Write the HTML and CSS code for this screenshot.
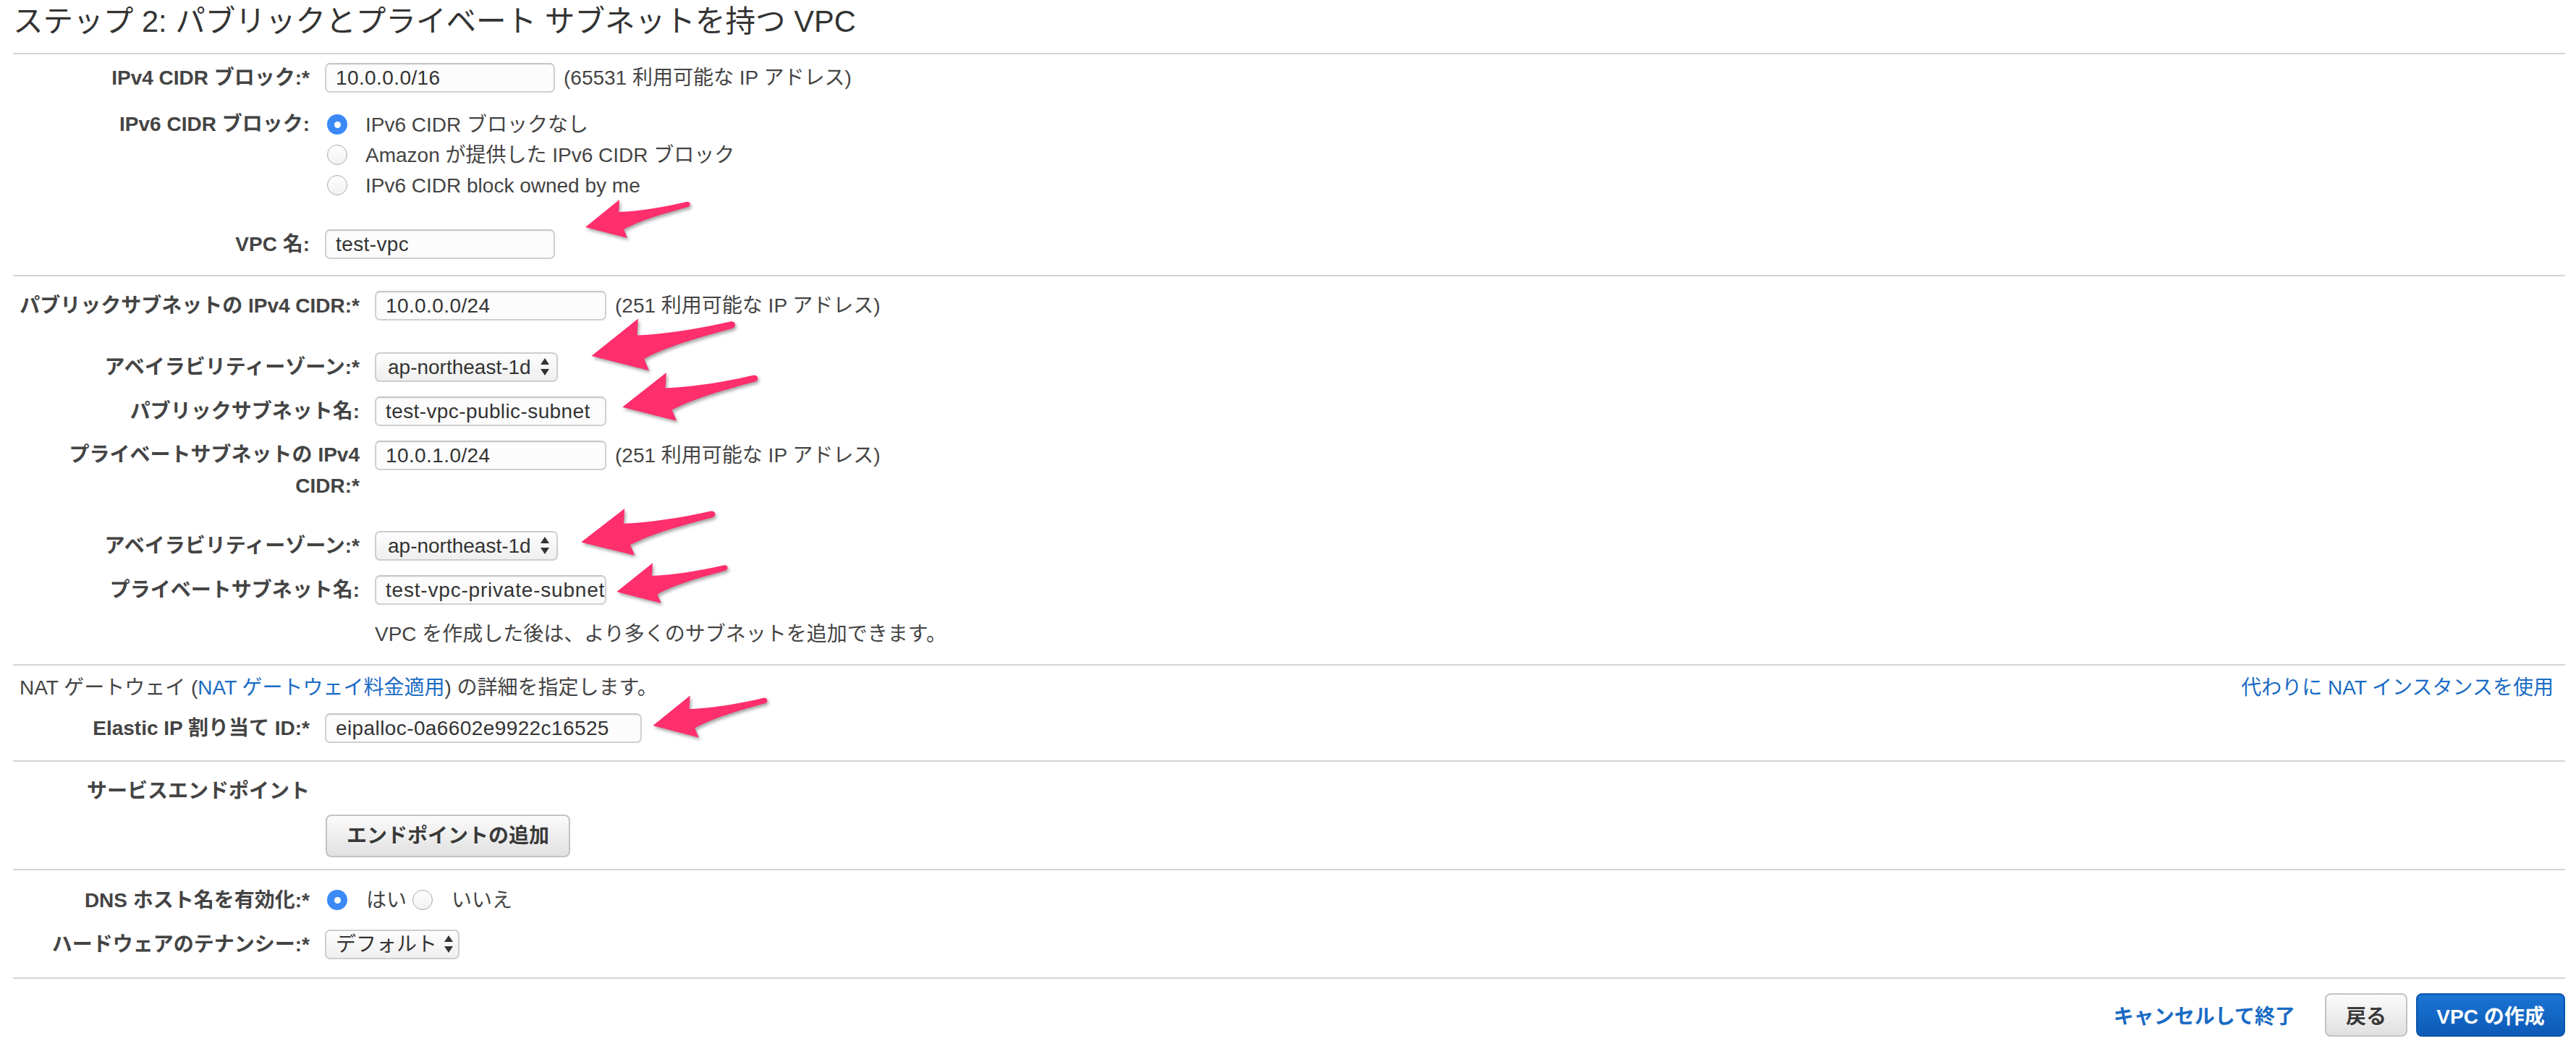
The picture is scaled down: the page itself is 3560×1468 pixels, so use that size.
FILE: index.html
```html
<!DOCTYPE html>
<html lang="ja">
<head>
<meta charset="utf-8">
<title>ステップ 2: パブリックとプライベート サブネットを持つ VPC</title>
<link rel="stylesheet" href="styles.css">
</head>
<body>
<div class="page">
  <h1 class="title">ステップ 2: パブリックとプライベート サブネットを持つ VPC</h1>

  <section class="sec sec-vpc">
    <div class="row">
      <label class="lbl">IPv4 CIDR ブロック:*</label>
      <div class="val"><input class="txt w-318" type="text" value="10.0.0.0/16"><span class="hint">(65531 利用可能な IP アドレス)</span></div>
    </div>
    <div class="row row-top row-ipv6">
      <label class="lbl lbl-radio">IPv6 CIDR ブロック:</label>
      <div class="val radios">
        <div class="opt"><span class="radio on"></span><span>IPv6 CIDR ブロックなし</span></div>
        <div class="opt"><span class="radio"></span><span>Amazon が提供した IPv6 CIDR ブロック</span></div>
        <div class="opt"><span class="radio"></span><span>IPv6 CIDR block owned by me</span></div>
      </div>
    </div>
    <div class="row row-vpcname">
      <label class="lbl">VPC 名:</label>
      <div class="val"><input class="txt w-318" type="text" value="test-vpc"></div>
    </div>
  </section>

  <section class="sec sec-subnet">
    <div class="row">
      <label class="lbl">パブリックサブネットの IPv4 CIDR:*</label>
      <div class="val"><input class="txt w-320" type="text" value="10.0.0.0/24"><span class="hint">(251 利用可能な IP アドレス)</span></div>
    </div>
    <div class="row row-az">
      <label class="lbl">アベイラビリティーゾーン:*</label>
      <div class="val"><div class="select w-253"><span>ap-northeast-1d</span><svg class="updown" viewBox="0 0 14 24" width="14" height="24"><path d="M7 0 L13 9 L1 9 Z M1 15 L13 15 L7 24 Z" fill="#333"/></svg></div></div>
    </div>
    <div class="row row-next">
      <label class="lbl">パブリックサブネット名:</label>
      <div class="val"><input class="txt w-320" type="text" value="test-vpc-public-subnet"></div>
    </div>
    <div class="row row-top row-next">
      <label class="lbl lbl-wrap">プライベートサブネットの IPv4 CIDR:*</label>
      <div class="val val-top"><input class="txt w-320" type="text" value="10.0.1.0/24"><span class="hint">(251 利用可能な IP アドレス)</span></div>
    </div>
    <div class="row row-az2">
      <label class="lbl">アベイラビリティーゾーン:*</label>
      <div class="val"><div class="select w-253"><span>ap-northeast-1d</span><svg class="updown" viewBox="0 0 14 24" width="14" height="24"><path d="M7 0 L13 9 L1 9 Z M1 15 L13 15 L7 24 Z" fill="#333"/></svg></div></div>
    </div>
    <div class="row row-next">
      <label class="lbl">プライベートサブネット名:</label>
      <div class="val"><input class="txt w-320 tight" type="text" value="test-vpc-private-subnet"></div>
    </div>
    <div class="row row-next">
      <span class="lbl"></span>
      <div class="val note">VPC を作成した後は、より多くのサブネットを追加できます。</div>
    </div>
  </section>

  <section class="sec sec-nat">
    <div class="nat-line">
      <span class="nat-text">NAT ゲートウェイ (<a class="link" href="#">NAT ゲートウェイ料金適用</a>) の詳細を指定します。</span>
      <a class="link nat-alt" href="#">代わりに NAT インスタンスを使用</a>
    </div>
    <div class="row row-eip">
      <label class="lbl">Elastic IP 割り当て ID:*</label>
      <div class="val"><input class="txt w-438" type="text" value="eipalloc-0a6602e9922c16525"></div>
    </div>
  </section>

  <section class="sec sec-endpoint">
    <div class="row">
      <label class="lbl">サービスエンドポイント</label>
      <div class="val"></div>
    </div>
    <div class="row row-btn">
      <span class="lbl"></span>
      <div class="val"><button class="btn btn-add" type="button">エンドポイントの追加</button></div>
    </div>
  </section>

  <section class="sec sec-dns">
    <div class="row">
      <label class="lbl">DNS ホスト名を有効化:*</label>
      <div class="val yesno">
        <span class="radio on"></span><span class="yes">はい</span><span class="radio"></span><span class="no">いいえ</span>
      </div>
    </div>
    <div class="row row-next">
      <label class="lbl">ハードウェアのテナンシー:*</label>
      <div class="val"><div class="select w-186 sel-hw"><span>デフォルト</span><svg class="updown" viewBox="0 0 14 24" width="14" height="24"><path d="M7 0 L13 9 L1 9 Z M1 15 L13 15 L7 24 Z" fill="#333"/></svg></div></div>
    </div>
  </section>

  <footer class="foot">
    <a class="link link-cancel" href="#">キャンセルして終了</a>
    <button class="btn btn-back" type="button">戻る</button>
    <button class="btn btn-primary" type="button">VPC の作成</button>
  </footer>

  <svg class="arrow arrow-1" viewBox="-4 -42 154 62" preserveAspectRatio="none"><path d="M0,0 L47,-38 L46,-21 C75,-22 110,-28 140,-35 C145,-36 147,-30 142,-28 C105,-18 75,-9 53,3 L58,15 Z"/></svg>
  <svg class="arrow arrow-2" viewBox="-4 -42 154 62" preserveAspectRatio="none"><path d="M0,0 L47,-38 L46,-21 C75,-22 110,-28 140,-35 C145,-36 147,-30 142,-28 C105,-18 75,-9 53,3 L58,15 Z"/></svg>
  <svg class="arrow arrow-3" viewBox="-4 -42 154 62" preserveAspectRatio="none"><path d="M0,0 L47,-38 L46,-21 C75,-22 110,-28 140,-35 C145,-36 147,-30 142,-28 C105,-18 75,-9 53,3 L58,15 Z"/></svg>
  <svg class="arrow arrow-4" viewBox="-4 -42 154 62" preserveAspectRatio="none"><path d="M0,0 L47,-38 L46,-21 C75,-22 110,-28 140,-35 C145,-36 147,-30 142,-28 C105,-18 75,-9 53,3 L58,15 Z"/></svg>
  <svg class="arrow arrow-5" viewBox="-4 -42 154 62" preserveAspectRatio="none"><path d="M0,0 L47,-38 L46,-21 C75,-22 110,-28 140,-35 C145,-36 147,-30 142,-28 C105,-18 75,-9 53,3 L58,15 Z"/></svg>
  <svg class="arrow arrow-6" viewBox="-4 -42 154 62" preserveAspectRatio="none"><path d="M0,0 L47,-38 L46,-21 C75,-22 110,-28 140,-35 C145,-36 147,-30 142,-28 C105,-18 75,-9 53,3 L58,15 Z"/></svg>
</div>
</body>
</html>
```

FILE: styles.css
```css
* { box-sizing: border-box; }

html, body {
  margin: 0;
  padding: 0;
  background: #fff;
}

body {
  font-family: "Liberation Sans", Arial, "Noto Sans CJK JP", sans-serif;
  font-size: 28px;
  color: #444;
}

.page {
  position: relative;
  width: 3560px;
  min-height: 1468px;
  padding: 0 15px 0 18px;
}

.title {
  margin: 0;
  padding: 4px 0 17px 0;
  font-size: 41.6px;
  line-height: 52px;
  font-weight: normal;
  color: #333;
  white-space: nowrap;
}

.sec {
  border-top: 2px solid #d4d4d4;
}

.sec-vpc { padding: 10px 0 21px 0; }
.sec-subnet { padding: 18px 0 20px 0; }
.sec-nat { padding: 10px 0 23px 0; }
.sec-endpoint { padding: 18px 0 16px 0; }
.sec-dns { padding: 19px 0 24px 0; }

.row {
  display: flex;
  align-items: center;
  min-height: 44px;
}

.row-top { align-items: flex-start; }
.row-ipv6 { margin-top: 22px; }
.row-vpcname { margin-top: 38px; }
.row-az { margin-top: 41px; }
.row-az2 { margin-top: 39px; }
.row-next { margin-top: 17px; }
.row-eip { margin-top: 12px; }
.row-btn { margin-top: 11px; }

.lbl {
  flex: none;
  width: 410px;
  margin-right: 21px;
  text-align: right;
  font-weight: bold;
  line-height: 43px;
  color: #444;
}

.sec-subnet .lbl { width: 479px; }

.lbl-radio { line-height: 42px; }

.val {
  display: flex;
  align-items: center;
  line-height: 43px;
  white-space: nowrap;
}

.val-top { padding-top: 1px; }

.txt {
  height: 41px;
  padding: 0 12px 0 13px;
  border: 2px solid #d0d0d0;
  border-top-color: #c6c6c6;
  border-radius: 7px;
  background: #fcfcfc;
  box-shadow: inset 0 1px 2px rgba(0, 0, 0, 0.05);
  font: inherit;
  font-size: 28px;
  letter-spacing: 0.4px;
  color: #333;
  outline: none;
}

.txt.tight { padding-right: 0; letter-spacing: 0.8px; }

.w-318 { width: 318px; }
.w-320 { width: 320px; }
.w-438 { width: 438px; }
.w-253 { width: 253px; }
.w-186 { width: 186px; }

.hint {
  margin-left: 12px;
  color: #444;
}

.radios {
  flex-direction: column;
  align-items: flex-start;
}

.opt {
  display: flex;
  align-items: center;
  height: 42px;
}

.radio {
  flex: none;
  display: inline-flex;
  align-items: center;
  justify-content: center;
  width: 28px;
  height: 28px;
  border-radius: 50%;
  border: 1.5px solid #a9a9a9;
  background: linear-gradient(#ffffff, #f1f1f1);
}

.opt .radio { margin: 0 25px 0 3px; }

.radio.on {
  border: none;
  background: #3b89f6;
}

.radio.on::after {
  content: "";
  width: 9px;
  height: 9px;
  border-radius: 50%;
  background: #fff;
}

.select {
  display: flex;
  align-items: center;
  justify-content: space-between;
  height: 41px;
  padding: 0 9px 0 16px;
  border: 2px solid #cdcdcd;
  border-radius: 7px;
  background: linear-gradient(#fdfdfd, #efefef);
  color: #333;
}

.sel-hw { padding: 0 6px 0 13px; }

.updown { flex: none; }

.note { color: #444; }

.nat-line {
  display: flex;
  justify-content: space-between;
  align-items: center;
  height: 42px;
  line-height: 42px;
  padding: 0 16px 0 9px;
}

.link {
  color: #1a6bc4;
  text-decoration: none;
}

.yesno .radio.on { margin: 0 26px 0 3px; }
.yesno .yes { margin-right: 8px; }
.yesno .radio:not(.on) { margin-right: 26px; }

.btn {
  font: inherit;
  font-size: 28px;
  font-weight: bold;
  border-radius: 8px;
  cursor: pointer;
  padding: 0;
}

.btn-add {
  width: 338px;
  height: 59px;
  margin-left: 1px;
  border: 2px solid #c3c3c3;
  background: linear-gradient(#fbfbfb, #e1e1e1);
  color: #3a3a3a;
  text-shadow: 0 1px 0 #fff;
}

.foot {
  display: flex;
  justify-content: flex-end;
  align-items: center;
  border-top: 2px solid #d4d4d4;
  padding-top: 20px;
}

.link-cancel {
  font-weight: bold;
  margin-right: 41px;
}

.btn-back {
  width: 114px;
  height: 60px;
  margin-right: 12px;
  border: 2px solid #c3c3c3;
  background: linear-gradient(#fbfbfb, #e0e0e0);
  color: #3a3a3a;
  text-shadow: 0 1px 0 #fff;
}

.btn-primary {
  width: 206px;
  height: 60px;
  border: 2px solid #0b55ab;
  background: linear-gradient(#1b74d4, #0c5ab6);
  color: #fff;
}

.arrow {
  position: absolute;
  overflow: visible;
  fill: #ff2e6c;
  filter: drop-shadow(2px 3px 2px rgba(0, 0, 0, 0.35));
}

.arrow-1 { left: 805px; top: 272px; width: 154px; height: 62px; }
.arrow-2 { left: 812px; top: 435px; width: 211px; height: 84px; }
.arrow-3 { left: 855px; top: 510px; width: 199px; height: 78px; }
.arrow-4 { left: 798px; top: 698px; width: 197px; height: 76px; }
.arrow-5 { left: 848px; top: 774px; width: 163px; height: 65px; }
.arrow-6 { left: 898px; top: 957px; width: 168px; height: 68px; }
```
